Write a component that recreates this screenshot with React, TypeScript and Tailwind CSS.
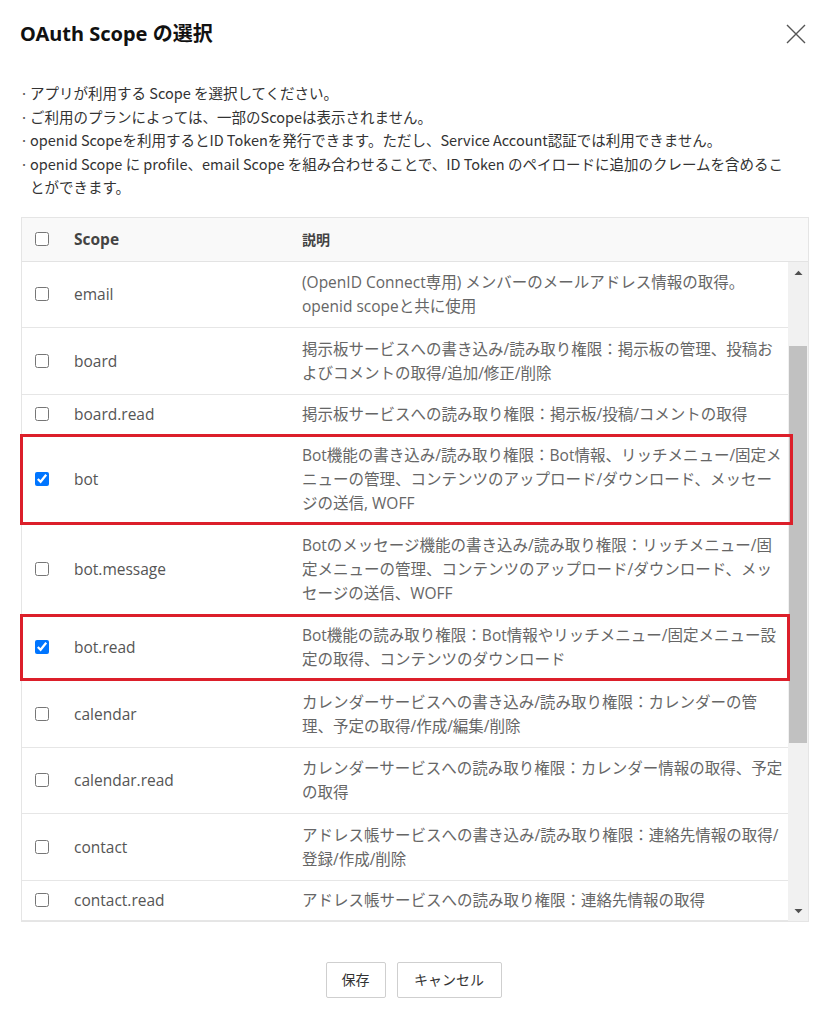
type Scope = { name: string; desc: string[]; checked?: boolean; mark?: 'wide' | 'narrow' }

const SCOPES: Scope[] = [
  { name: 'email', desc: ['(OpenID Connect専用) メンバーのメールアドレス情報の取得。', 'openid scopeと共に使用'] },
  { name: 'board', desc: ['掲示板サービスへの書き込み/読み取り権限：掲示板の管理、投稿お', 'よびコメントの取得/追加/修正/削除'] },
  { name: 'board.read', desc: ['掲示板サービスへの読み取り権限：掲示板/投稿/コメントの取得'] },
  {
    name: 'bot',
    checked: true,
    mark: 'wide',
    desc: ['Bot機能の書き込み/読み取り権限：Bot情報、リッチメニュー/固定メ', 'ニューの管理、コンテンツのアップロード/ダウンロード、メッセー', 'ジの送信, WOFF'],
  },
  {
    name: 'bot.message',
    desc: ['Botのメッセージ機能の書き込み/読み取り権限：リッチメニュー/固', '定メニューの管理、コンテンツのアップロード/ダウンロード、メッ', 'セージの送信、WOFF'],
  },
  {
    name: 'bot.read',
    checked: true,
    mark: 'narrow',
    desc: ['Bot機能の読み取り権限：Bot情報やリッチメニュー/固定メニュー設', '定の取得、コンテンツのダウンロード'],
  },
  { name: 'calendar', desc: ['カレンダーサービスへの書き込み/読み取り権限：カレンダーの管', '理、予定の取得/作成/編集/削除'] },
  { name: 'calendar.read', desc: ['カレンダーサービスへの読み取り権限：カレンダー情報の取得、予定', 'の取得'] },
  { name: 'contact', desc: ['アドレス帳サービスへの書き込み/読み取り権限：連絡先情報の取得/', '登録/作成/削除'] },
  { name: 'contact.read', desc: ['アドレス帳サービスへの読み取り権限：連絡先情報の取得'] },
]

// each note is a list of lines (the last one wraps in the original)
const NOTES: string[][] = [
  ['アプリが利用する Scope を選択してください。'],
  ['ご利用のプランによっては、一部のScopeは表示されません。'],
  ['openid Scopeを利用するとID Tokenを発行できます。ただし、Service Account認証では利用できません。'],
  ['openid Scope に profile、email Scope を組み合わせることで、ID Token のペイロードに追加のクレームを含めるこ', 'とができます。'],
]

const PAD: Record<number, string> = { 1: 'py-[7.5px]', 2: 'py-[8.75px]', 3: 'py-[8.5px]' }

function Row({ s }: { s: Scope }) {
  return (
    <div className={`relative flex items-center border-b border-[#e6e6e6] ${PAD[s.desc.length]}`}>
      <div className="w-[52px] shrink-0 pl-[13px] flex items-center">
        <input type="checkbox" defaultChecked={s.checked} className="w-[14px] h-[14px] m-0 accent-[#0075ff]" />
      </div>
      <div className="w-[228px] shrink-0 text-[#555]">{s.name}</div>
      <div className="flex-1 text-[#666]">
        {s.desc.map((l) => (
          <p key={l} className="whitespace-nowrap">{l}</p>
        ))}
      </div>
      {s.mark === 'wide' && <div className="absolute z-10 -left-[2px] -right-[5px] -top-[1px] -bottom-[1px] border-[3px] border-[#dc1f2a]" />}
      {s.mark === 'narrow' && <div className="absolute z-10 -left-[2px] -right-[2px] -top-[1px] -bottom-[1px] border-[3px] border-[#dc1f2a]" />}
    </div>
  )
}

export default function App() {
  return (
    <div className="w-[827px] h-[1024px] bg-white font-['Noto_Sans','Noto_Sans_CJK_JP',sans-serif] text-[#333]">
      <div className="flex items-center justify-between pl-[20px] pr-[20px] pt-[21px]">
        <h1 className="text-[20px] leading-[26px] font-bold text-[#111]">OAuth Scope の選択</h1>
        <svg width="20" height="20" viewBox="0 0 20 20" className="mr-[1px]">
          <path d="M1 1 L19 19 M19 1 L1 19" stroke="#555" strokeWidth="1.4" fill="none" />
        </svg>
      </div>

      <ul className="mt-[34px] pl-[20px] text-[14.5px] leading-[23.5px] font-['Noto_Sans_CJK_JP',sans-serif]">
        {NOTES.map((n) => (
          <li key={n[0]} className="flex">
            <span className="w-[10px] shrink-0 text-[#555]">·</span>
            <div>
              {n.map((l) => (
                <p key={l} className="whitespace-nowrap">{l}</p>
              ))}
            </div>
          </li>
        ))}
      </ul>

      <div className="mt-[18px] ml-[21px] w-[788px] border border-[#e5e5e5] text-[15.5px] leading-[24px] font-['Open_Sans','Noto_Sans_CJK_JP',sans-serif]">
        <div className="flex items-center h-[44px] bg-[#f9f9f9] border-b border-[#e3e3e3]">
          <div className="w-[52px] shrink-0 pl-[13px] flex items-center">
            <input type="checkbox" className="w-[14px] h-[14px] m-0" />
          </div>
          <div className="w-[228px] shrink-0 font-bold text-[#444]">Scope</div>
          <div className="flex-1 text-[14px] font-bold text-[#444] font-['Noto_Sans_CJK_JP',sans-serif]">説明</div>
        </div>
        <div className="flex">
          <div className="w-[766px]">
            {SCOPES.map((s) => (
              <Row key={s.name} s={s} />
            ))}
          </div>
          <div className="flex-1 bg-[#f1f1f1] flex flex-col items-center">
            <svg width="9" height="6" viewBox="0 0 9 6" className="mt-[8px]">
              <path d="M0.5 5 L4.5 0.8 L8.5 5 Z" fill="#505050" />
            </svg>
            <div className="mt-[70px] w-[18px] h-[397px] bg-[#c1c1c1]" />
            <div className="flex-1" />
            <svg width="9" height="6" viewBox="0 0 9 6" className="mb-[7px]">
              <path d="M0.5 1 L4.5 5.2 L8.5 1 Z" fill="#505050" />
            </svg>
          </div>
        </div>
      </div>

      <div className="mt-[40px] flex justify-center gap-[11px] text-[14px] font-['Noto_Sans_CJK_JP',sans-serif]">
        <button className="w-[60px] h-[36px] border border-[#cfcfcf] rounded-[2px] bg-white text-[#333]">保存</button>
        <button className="w-[105px] h-[36px] border border-[#cfcfcf] rounded-[2px] bg-white text-[#333]">キャンセル</button>
      </div>
    </div>
  )
}
